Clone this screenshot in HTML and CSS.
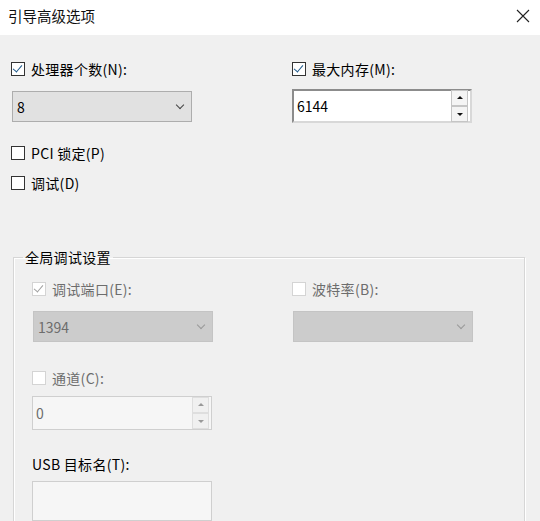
FILE: index.html
```html
<!DOCTYPE html>
<html lang="zh-CN">
<head>
<meta charset="UTF-8">
<title>引导高级选项</title>
<link rel="stylesheet" href="styles.css">
</head>
<body>
<div class="dialog">
  <div class="titlebar">
    <span class="title">引导高级选项</span>
    <span class="close">
      <svg width="14" height="14" viewBox="0 0 14 14"><path d="M1 1 L13 13 M13 1 L1 13" stroke="#222" stroke-width="1.1" fill="none"/></svg>
    </span>
  </div>

  <div class="content">
    <div class="row top">
      <div class="col">
        <label class="check"><span class="box checked"></span>处理器个数(N):</label>
        <div class="combo"><span>8</span><span class="chev"></span></div>
      </div>
      <div class="col">
        <label class="check"><span class="box checked"></span>最大内存(M):</label>
        <div class="spin">
          <span>6144</span>
          <div class="arrows"><span class="up"></span><span class="down"></span></div>
        </div>
      </div>
    </div>

    <label class="check pci"><span class="box"></span>PCI 锁定(P)</label>
    <label class="check debug"><span class="box"></span>调试(D)</label>

    <fieldset class="group">
      <legend>全局调试设置</legend>
      <div class="row">
        <div class="col">
          <label class="check disabled"><span class="box checked"></span>调试端口(E):</label>
          <div class="combo disabled"><span>1394</span><span class="chev"></span></div>
        </div>
        <div class="col">
          <label class="check disabled"><span class="box"></span>波特率(B):</label>
          <div class="combo disabled"><span></span><span class="chev"></span></div>
        </div>
      </div>
      <div class="col channel">
        <label class="check disabled"><span class="box"></span>通道(C):</label>
        <div class="spin disabled">
          <span>0</span>
          <div class="arrows"><span class="up"></span><span class="down"></span></div>
        </div>
      </div>
      <div class="col usb">
        <div class="label">USB 目标名(T):</div>
        <div class="textbox"></div>
      </div>
    </fieldset>
  </div>
</div>
</body>
</html>
```

FILE: styles.css
```css
body {
  margin: 0;
  background: #f0f0f0;
  font-family: "Noto Sans CJK SC", "Microsoft YaHei", sans-serif;
  font-size: 14px;
  color: #000;
  overflow: hidden;
}

.dialog {
  width: 540px;
  height: 521px;
}

.titlebar {
  height: 35px;
  background: #fff;
  display: flex;
  align-items: center;
  justify-content: space-between;
  padding: 0 10px 0 8px;
}

.title {
  font-size: 14.5px;
  color: #111;
  margin-top: -4px;
}

.close {
  display: flex;
  margin-top: -3px;
}

.content {
  padding: 26px 0 0 11px;
}

.row {
  display: flex;
}

.row.top .col:first-child {
  width: 281px;
}

.group .row .col:first-child {
  width: 260px;
}

.col {
  display: flex;
  flex-direction: column;
}

.check {
  display: flex;
  align-items: center;
  height: 16px;
  line-height: 16px;
  letter-spacing: 0.3px;
}

.box {
  width: 12px;
  height: 12px;
  border: 1px solid #333;
  background: #fff;
  margin-right: 6px;
  position: relative;
}

.box.checked::after {
  content: "";
  position: absolute;
  left: 3px;
  top: 0px;
  width: 4px;
  height: 8px;
  border: solid #1f5a8c;
  border-width: 0 1.5px 1.5px 0;
  transform: rotate(40deg);
}

.combo {
  margin: 14px 0 0 1px;
  width: 180px;
  height: 31px;
  box-sizing: border-box;
  border: 1px solid #adadad;
  background: #e1e1e1;
  display: flex;
  align-items: center;
  justify-content: space-between;
  padding: 0 8px 0 4px;
}

.chev {
  width: 5px;
  height: 5px;
  border: solid #444;
  border-width: 0 1px 1px 0;
  transform: rotate(45deg);
  margin-top: -3px;
}

.spin {
  margin-top: 12px;
  width: 180px;
  height: 34px;
  box-sizing: border-box;
  border: 2px solid #8c8c8c;
  border-right-color: #d8d8d8;
  border-bottom-color: #d8d8d8;
  background: #fff;
  display: flex;
  align-items: center;
  justify-content: space-between;
  padding-left: 3px;
}

.arrows {
  display: flex;
  flex-direction: column;
  margin-right: 2px;
}

.arrows span {
  width: 15px;
  height: 14px;
  border: 1px solid #c5c5c5;
  background: #f4f4f4;
  position: relative;
}

.arrows .up::after,
.arrows .down::after {
  content: "";
  position: absolute;
  left: 5px;
  border-left: 3px solid transparent;
  border-right: 3px solid transparent;
}

.arrows .up::after {
  top: 5px;
  border-bottom: 3px solid #111;
}

.arrows .down::after {
  top: 6px;
  border-top: 3px solid #111;
}

.pci {
  margin-top: 22px;
}

.debug {
  margin-top: 14px;
}

.group {
  margin: 56px 0 0 2px;
  width: 512px;
  height: 300px;
  border: 1px solid #d6d6d6;
  box-shadow: inset 1px 1px 0 #fff, 1px 1px 0 #fff;
  padding: 14px 0 0 18px;
  box-sizing: border-box;
}

.group legend {
  padding: 0 2px;
  margin-left: -9px;
  letter-spacing: 0.3px;
}

.disabled {
  color: #6d6d6d;
}

.check.disabled .box {
  border-color: #d4d4d4;
}

.check.disabled .box.checked::after {
  border-color: #a0a0a0;
}

.combo.disabled {
  background: #cccccc;
  border-color: #c4c4c4;
}

.combo.disabled .chev {
  border-color: #999;
}

.spin.disabled {
  margin-top: 10px;
  border: 1px solid #cfcfcf;
  background: #f6f6f6;
  color: #6d6d6d;
}

.spin.disabled .arrows span {
  border-color: #dedede;
  background: #f0f0f0;
}

.spin.disabled .arrows .up::after {
  border-bottom-color: #999;
}

.spin.disabled .arrows .down::after {
  border-top-color: #999;
}

.channel {
  margin-top: 28px;
}

.usb {
  margin-top: 26px;
}

.usb .label {
  line-height: 16px;
  letter-spacing: 0.3px;
}

.textbox {
  margin-top: 9px;
  width: 180px;
  height: 40px;
  box-sizing: border-box;
  border: 1px solid #cfcfcf;
  background: #f6f6f6;
}
```
